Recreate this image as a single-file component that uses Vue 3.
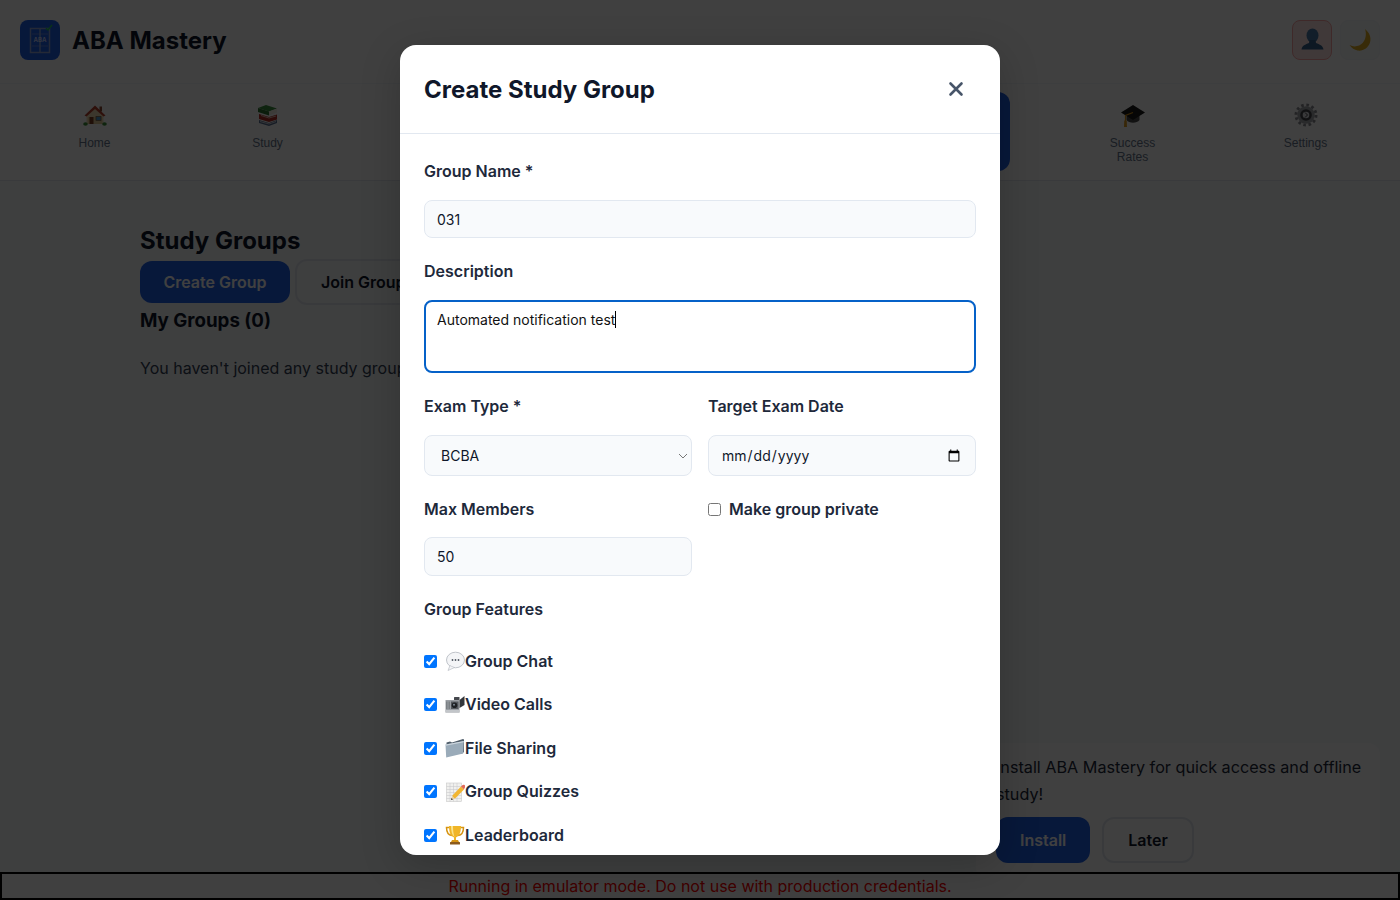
<script setup>
import { onMounted, ref } from 'vue'

const icons = {
  home: `<path d="M3.500 13 V21 H20.500 V13 L12 5 Z" fill="#f0dcb4"/><path d="M5 14 H19 V21 H5 Z" fill="#e2c998"/><path d="M1.500 12.500 L12 2.500 L22.500 12.500 L20.500 13.500 L12 6 L3.500 13.500 Z" fill="#b8412f"/><rect x="16.500" y="3.500" width="2.500" height="5" fill="#8a4a33"/><rect x="6.500" y="14" width="4" height="7" fill="#7b3f22"/><rect x="13" y="13.500" width="5" height="4" fill="#4f9dd0" stroke="#7a5a3a" stroke-width=".7"/><ellipse cx="2.500" cy="21" rx="2.300" ry="1.700" fill="#3f8f3a"/><ellipse cx="21.500" cy="21" rx="2.300" ry="1.700" fill="#3f8f3a"/>`,
  books: `<path d="M3 17 L13 20 L21 17 V20 L13 23 L3 20 Z" fill="#5a6f93"/><path d="M4 18.500 L13 21 L20 18.500" fill="none" stroke="#e8e8e8" stroke-width=".8"/><path d="M3 11 L13 14 L21 11.500 V16.500 L13 19 L3 16 Z" fill="#b32d24"/><path d="M5 12.500 L13 15 L20 13" fill="none" stroke="#e7dccb" stroke-width=".8"/><path d="M2 5 L10 2 L21 5.500 L13 8.500 Z" fill="#3d9140"/><path d="M2 5 L13 8.500 V12.500 L2 9 Z" fill="#2d7431"/><path d="M13 8.500 L21 5.500 V9.500 L13 12.500 Z" fill="#f2efe4"/>`,
  cap: `<path d="M5.500 11 V17 C8 20.500 16 20.500 18.500 17 V11 Z" fill="#4a4a4a"/><path d="M0 9.500 L12 2 L24 9.500 L12 17 Z" fill="#1a1a1a"/><path d="M12 9.500 L4.500 12.500 V20" fill="none" stroke="#d8921a" stroke-width="1.200"/><path d="M3.300 17.500 H5.700 L6 24 H3 Z" fill="#e09a1c"/>`,
  gear: `<circle cx="12" cy="12" r="10" fill="none" stroke="#8b8d93" stroke-width="3" stroke-dasharray="2.600 2.640"/><circle cx="12" cy="12" r="8.700" fill="#a4a6ac"/><circle cx="12" cy="12" r="5.800" fill="#44454a"/><circle cx="12" cy="12" r="3.300" fill="#e3e4e8"/><path d="M11 9.500 L13.500 12 L11 14.500" fill="none" stroke="#44454a" stroke-width="1"/>`,
  user: `<ellipse cx="12.500" cy="7.500" rx="6" ry="7" fill="#4a7aa6"/><path d="M9.500 12 H15.500 L16 15 C19.500 16.500 23 17.500 23.500 21.500 H1.500 C2 17.500 5.500 16.500 9 15 Z" fill="#35608a"/>`,
  moon: `<path d="M17 1 C21.500 4.500 23.500 9.500 22 14.500 C20.300 20 15 23.400 9.500 22.500 C6.500 22 3.500 20 1.500 17 C6 19.500 11.500 18.500 14.800 14.800 C18 11 18.600 5.500 17 1 Z" fill="#e0ad20"/>`,
  chat: `<ellipse cx="10.500" cy="9" rx="9" ry="7.800" fill="#f4f5f7" stroke="#b9bdc4" stroke-width=".9"/><path d="M5 14.500 L3 19.500 L9.500 16.500 Z" fill="#f4f5f7" stroke="#b9bdc4" stroke-width=".7" stroke-linejoin="round"/><path d="M4.800 13.800 L9 16 L7 13.500 Z" fill="#f4f5f7"/><circle cx="7.500" cy="9" r=".9" fill="#4f5560"/><circle cx="10.500" cy="9" r=".9" fill="#4f5560"/><circle cx="13.500" cy="9" r=".9" fill="#4f5560"/>`,
  video: `<path d="M0.500 5 H14.500 V17.500 H0.500 Z" fill="#9a9ea3"/><path d="M0.500 15 H14.500 V17.500 H0.500 Z" fill="#c2c5c9"/><path d="M1.500 6.500 V14 M3 6.500 V14 M4.500 6.500 V14" stroke="#6e7277" stroke-width=".7"/><path d="M14.500 5 L19.500 1 V10 L14.500 13 Z" fill="#33363b"/><rect x="9" y="2" width="5.500" height="3" rx=".5" fill="#45484d"/><rect x="6" y="6.500" width="7.500" height="7.500" fill="#55595e"/><circle cx="9.500" cy="10.200" r="2.800" fill="#1e2023"/><circle cx="9" cy="9.700" r="1" fill="#7c8794"/>`,
  folder: `<path d="M1.500 4.500 L5 3.500 L7 4.500 L18 1 L19 1.500 V14 L17 15.500 H1.500 Z" fill="#4f5d6a"/><path d="M0.500 6.500 L17 3.500 L18.800 3 L18.200 15.500 L1.200 19.500 Z" fill="#9aabb9"/><path d="M0.500 6.500 L18.700 3 V4.300 L0.600 7.800 Z" fill="#cad4dc"/>`,
  memo: `<rect x="1.500" y="1" width="15" height="18.500" fill="#f0f0ee" stroke="#c9c9c9" stroke-width=".6"/><path d="M1.500 4.500 H16.500 M1.500 7.500 H16.500 M1.500 10.500 H16.500 M1.500 13.500 H16.500 M1.500 16.500 H16.500 M5 1 V19.500 M8.500 1 V19.500 M12 1 V19.500" stroke="#c4c4c8" stroke-width=".5"/><path d="M7 14 L16 4.500 L19 7.500 L9.800 16.800 Z" fill="#f2b632"/><path d="M16 4.500 L17.300 3.200 C18 2.500 19 2.500 19.500 3 L20 3.600 C20.500 4.200 20.400 5.200 19.700 5.800 L19 7.500 Z" fill="#e26a5b"/><path d="M7 14 L6 18 L9.800 16.800 Z" fill="#e8cfa5"/><path d="M6.500 16 L6 18 L8 17.400 Z" fill="#333"/>`,
  trophy: `<path d="M4.500 2.500 H1.500 C1.500 7 3 10 7 10.500 M15.500 2.500 H18.500 C18.500 7 17 10 13 10.500" fill="none" stroke="#d69412" stroke-width="1.500"/><path d="M4 1 H16 C16 7 14.500 11 11 12.500 V15 H9 V12.500 C5.500 11 4 7 4 1 Z" fill="#f0b527"/><path d="M6 1 H8 C8 6 8.500 9 9.500 12 C7 10 6 6 6 1 Z" fill="#fbe38a"/><path d="M7 15 H13 L14 17 H6 Z" fill="#d69412"/><rect x="5" y="17" width="10" height="2.500" rx=".5" fill="#8b5a1c"/>`
}

const nav = [
  { label: 'Home', icon: 'home' },
  { label: 'Study', icon: 'books' },
  {}, {}, {},
  { active: true },
  { label: 'Success Rates', icon: 'cap' },
  { label: 'Settings', icon: 'gear' }
]
const features = [
  { icon: 'chat', label: 'Group Chat' },
  { icon: 'video', label: 'Video Calls' },
  { icon: 'folder', label: 'File Sharing' },
  { icon: 'memo', label: 'Group Quizzes' },
  { icon: 'trophy', label: 'Leaderboard' }
]
const area = ref(null)
onMounted(() => {
  const el = area.value
  el.focus()
  el.setSelectionRange(el.value.length, el.value.length)
})
</script>

<template>
  <div class="page">
    <header class="header">
      <div class="brand">
        <div class="logo">
          <svg width="40" height="40" viewBox="0 0 40 40">
            <rect x="10.500" y="8.500" width="19" height="24" fill="none" stroke="#8ea3d8" stroke-width="1.500" />
            <line x1="20" y1="8" x2="20" y2="33" stroke="#8ea3d8" stroke-width="1.500" />
            <line x1="12" y1="14" x2="28" y2="14" stroke="#8ea3d8" stroke-width=".6" />
            <line x1="12" y1="26" x2="28" y2="26" stroke="#8ea3d8" stroke-width=".6" />
            <text x="20" y="22" text-anchor="middle" class="logo-text">ABA</text>
            <path d="M26 8 L28 10 L32 5" fill="none" stroke="#22c55e" stroke-width="1.500" />
          </svg>
        </div>
        <h1 class="brand-name">ABA Mastery</h1>
      </div>
      <div class="header-actions">
        <button class="icon-btn user-btn"><svg width="24" height="24" viewBox="0 0 24 24" v-html="icons.user"></svg></button>
        <button class="icon-btn theme-btn"><svg width="24" height="24" viewBox="0 0 24 24" v-html="icons.moon"></svg></button>
      </div>
    </header>

    <nav class="nav">
      <div v-for="(item, i) in nav" :key="i" class="nav-item" :class="{ active: item.active }">
        <svg v-if="item.icon" class="nav-icon" width="24" height="24" viewBox="0 0 24 24" v-html="icons[item.icon]"></svg>
        <span v-if="item.label" class="nav-label">{{ item.label }}</span>
      </div>
    </nav>

    <main class="main">
      <h2 class="page-title">Study Groups</h2>
      <div class="actions">
        <button class="btn btn-primary">Create Group</button>
        <button class="btn btn-outline">Join Group</button>
      </div>
      <h3 class="section-title">My Groups (0)</h3>
      <p class="empty">You haven't joined any study groups yet.</p>
    </main>

    <aside class="install">
      <p class="install-text">Install ABA Mastery for quick access and offline study!</p>
      <div class="install-actions">
        <button class="btn btn-primary">Install</button>
        <button class="btn btn-outline">Later</button>
      </div>
    </aside>

    <div class="emulator">Running in emulator mode. Do not use with production credentials.</div>

    <div class="overlay">
      <section class="modal">
        <div class="modal-header">
          <h2 class="modal-title">Create Study Group</h2>
          <button class="close" aria-label="Close">
            <svg width="16" height="16" viewBox="0 0 16 16">
              <path d="M2.500 2.500 L13.500 13.500 M13.500 2.500 L2.500 13.500" stroke="#475569" stroke-width="2.600" stroke-linecap="round" />
            </svg>
          </button>
        </div>
        <form class="modal-body" @submit.prevent>
          <div class="field">
            <label class="label">Group Name *</label>
            <input class="control" value="031" />
          </div>
          <div class="field">
            <label class="label">Description</label>
            <div class="area-wrap">
              <textarea ref="area" class="control area" rows="3">Automated notification test</textarea>
              <span class="caret"></span>
            </div>
          </div>
          <div class="row">
            <div class="field">
              <label class="label">Exam Type *</label>
              <select class="control select"><option>BCBA</option></select>
            </div>
            <div class="field">
              <label class="label">Target Exam Date</label>
              <input class="control date" type="date" />
            </div>
          </div>
          <div class="row">
            <div class="field tight">
              <label class="label">Max Members</label>
              <input class="control members" value="50" />
            </div>
            <div class="field">
              <label class="check-label private"><input type="checkbox" class="check" />Make group private</label>
            </div>
          </div>
          <div class="features">
            <label class="label features-label">Group Features</label>
            <label v-for="f in features" :key="f.label" class="check-label feature">
              <input type="checkbox" class="check" checked />
              <svg class="feature-icon" width="20" height="20" viewBox="0 0 20 20" v-html="icons[f.icon]"></svg>
              <span>{{ f.label }}</span>
            </label>
          </div>
        </form>
      </section>
    </div>
  </div>
</template>

<style>
html, body { margin: 0; overflow: hidden; }
</style>

<style scoped>
.page {
  position: relative;
  width: 1400px;
  height: 900px;
  overflow: hidden;
  background: #f8fafc;
  color: #0f172a;
  font-family: Inter, "Noto Sans", sans-serif;
}
.header {
  height: 84px;
  box-sizing: border-box;
  padding: 20px 20px 24px;
  display: flex;
  align-items: center;
  justify-content: space-between;
  background: #fff;
  border-bottom: 1px solid #f1f5f9;
}
.brand { display: flex; align-items: center; gap: 12px; }
.logo {
  width: 40px;
  height: 40px;
  background: #1e5fe8;
  border-radius: 8px;
}
.logo-text { font: 700 6px Inter, sans-serif; fill: #c7d2fe; }
.brand-name { margin: 2px 0 0; font-size: 24px; font-weight: 700; }
.header-actions { display: flex; gap: 8px; }
.icon-btn {
  width: 40px;
  height: 40px;
  padding: 0;
  border-radius: 8px;
  background: #f8fafc;
  border: 1px solid #f1f5f9;
  box-sizing: border-box;
  display: flex;
  align-items: center;
  justify-content: center;
}
.user-btn { background: #fee2e2; border-color: #fca5a5; }
.nav {
  height: 97px;
  box-sizing: border-box;
  padding: 8px 8px 0;
  display: grid;
  grid-template-columns: repeat(8, 173px);
  background: #fff;
  border-bottom: 1px solid #e2e8f0;
}
.nav-item {
  width: 100px;
  height: 79px;
  justify-self: center;
  display: flex;
  flex-direction: column;
  align-items: center;
  gap: 9px;
  padding-top: 11px;
  box-sizing: border-box;
  border-radius: 12px;
}
.nav-item.active { background: #1e5fe8; }
.nav-icon { flex: none; }
.nav-label {
  font-family: "Liberation Sans", Arial, sans-serif;
  font-size: 12px;
  line-height: 14px;
  color: #64748b;
  text-align: center;
  width: 60px;
}
.main { padding: 44.500px 140px 0; }
.page-title { margin: 0; font-size: 24px; line-height: 30px; font-weight: 700; }
.actions { display: flex; gap: 5px; margin-top: 3.500px; align-items: center; }
.btn {
  box-sizing: border-box;
  border-radius: 12px;
  font-family: Inter, sans-serif;
  font-size: 16px;
  font-weight: 600;
  padding: 0 24px;
}
.actions .btn-primary { height: 42px; width: 150px; padding: 0; }
.actions .btn-outline { height: 46px; }
.btn-primary { background: #1e5fe8; color: #fff; border: 0; }
.btn-outline { background: transparent; color: #0f172a; border: 2px solid #e2e8f0; }
.section-title { margin: 4px 0 0; font-size: 18.720px; line-height: 24px; font-weight: 700; }
.empty { margin: 23px 0 0; font-size: 16px; line-height: 24px; color: #334155; }
.install {
  position: absolute;
  right: 20px;
  bottom: 20px;
  width: 404px;
  height: 137px;
  box-sizing: border-box;
  padding: 11px 0 0 20px;
  background: #fff;
  border-radius: 12px;
}
.install-text { margin: 0; font-size: 16.200px; line-height: 27px; color: #1e293b; }
.install-actions { display: flex; gap: 12px; margin-top: 9px; }
.install .btn { height: 46px; }
.emulator {
  position: absolute;
  left: 0;
  right: 0;
  bottom: 0;
  height: 28px;
  box-sizing: border-box;
  border: 2px solid #000;
  background: #fff;
  color: #ff0000;
  text-align: center;
  font-size: 16px;
  line-height: 24px;
}
.overlay {
  position: absolute;
  inset: 0;
  display: flex;
  align-items: center;
  justify-content: center;
  background: rgba(0, 0, 0, 0.75);
}
.modal {
  width: 600px;
  height: 810px;
  background: #fff;
  border-radius: 16px;
  overflow: hidden;
  display: flex;
  flex-direction: column;
  box-shadow: 0 10px 40px rgba(0, 0, 0, 0.2);
}
.modal-header {
  height: 89px;
  flex: none;
  box-sizing: border-box;
  padding: 0 24px;
  display: flex;
  align-items: center;
  justify-content: space-between;
  border-bottom: 1px solid #e2e8f0;
}
.modal-title { margin: 0; font-size: 24px; font-weight: 700; color: #0f172a; }
.close {
  width: 40px;
  height: 40px;
  padding: 0;
  background: none;
  border: 0;
  display: flex;
  align-items: center;
  justify-content: center;
}
.modal-body { padding: 25px 24px 0; display: flex; flex-direction: column; gap: 21px; }
.field { display: flex; flex-direction: column; gap: 17px; min-width: 0; }
.field.tight { gap: 16px; }
.label { font-size: 16px; line-height: 24px; font-weight: 600; color: #1e293b; }
.control {
  box-sizing: border-box;
  width: 100%;
  height: 38px;
  padding: 0 12px;
  border: 1px solid #e2e8f0;
  border-radius: 8px;
  background: #f8fafc;
  color: #0f172a;
  font-family: Inter, sans-serif;
  font-size: 14px;
  outline: none;
}
.members { height: 39px; }
.area-wrap { position: relative; }
.area {
  display: block;
  height: 73px;
  padding: 9px 11px;
  background: #fff;
  border: 2px solid #0561c8;
  color: #111;
  resize: none;
  line-height: 17px;
}
.caret {
  position: absolute;
  left: 191px;
  top: 11px;
  width: 1px;
  height: 17px;
  background: #000;
}
.select {
  height: 41px;
  padding: 0 16px;
  appearance: none;
  background: #f8fafc url("data:image/svg+xml,%3Csvg xmlns='http://www.w3.org/2000/svg' width='10' height='6'%3E%3Cpath d='M1 1l4 4 4-4' fill='none' stroke='%23777' stroke-width='1'/%3E%3C/svg%3E") no-repeat right 3px center;
}
.date { height: 41px; }
.row { display: grid; grid-template-columns: 1fr 1fr; gap: 16px; }
.check-label {
  display: flex;
  align-items: center;
  font-size: 16px;
  line-height: 24px;
  font-weight: 600;
  color: #1e293b;
}
.check { width: 13px; height: 13px; margin: 0 8px 0 0; flex: none; }
.features { display: flex; flex-direction: column; gap: 24.500px; }
.features-label { margin-bottom: 6px; }
.feature { line-height: 19px; height: 19px; }
.feature-icon { flex: none; }
</style>
